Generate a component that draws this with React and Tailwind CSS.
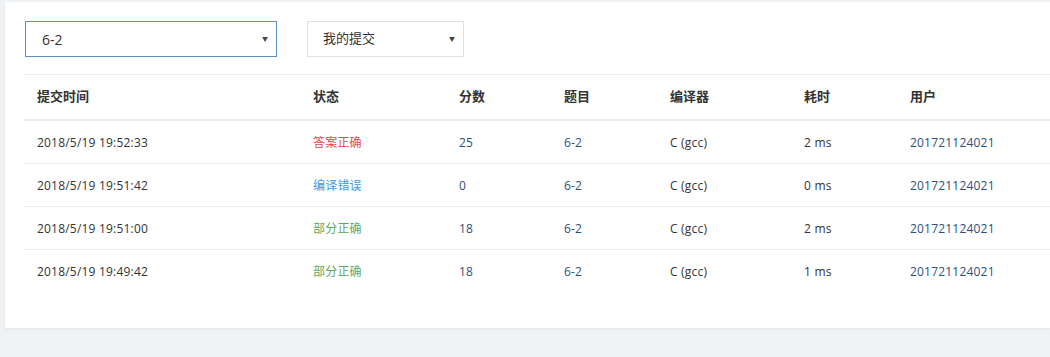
const rows = [
  { time: "2018/5/19 19:52:33", status: "答案正确", statusColor: "text-[#e5474b]", score: "25", ms: "2 ms" },
  { time: "2018/5/19 19:51:42", status: "编译错误", statusColor: "text-[#3c9be0]", score: "0", ms: "0 ms" },
  { time: "2018/5/19 19:51:00", status: "部分正确", statusColor: "text-[#5fa85a]", score: "18", ms: "2 ms" },
  { time: "2018/5/19 19:49:42", status: "部分正确", statusColor: "text-[#5fa85a]", score: "18", ms: "1 ms" },
];

const cols = "grid grid-cols-[276px_146px_105px_106px_134px_106px_1fr]";

function Select({ value, width, active }) {
  return (
    <div
      className={`flex items-center justify-between h-[36px] bg-white border ${
        active ? "border-[#5a8ec6] text-[14px] pl-[16px]" : "border-[#dcdfe3] text-[13px] pl-[15px]"
      } pr-[8px] text-[#333] ${width}`}
    >
      <span>{value}</span>
      <span className="text-[6px] text-[#444] pt-[1px]">▼</span>
    </div>
  );
}

export default function App() {
  return (
    <div
      className="w-[1050px] h-[357px] overflow-hidden bg-[#eef2f4] pt-[2px] pl-[5px]"
      style={{ fontFamily: '"Open Sans", "Noto Sans CJK SC", sans-serif' }}
    >
      <div className="bg-white pt-[19px] pb-[35px] pl-[19px] shadow-[0_1px_2px_rgba(0,0,0,0.05)]">
        <div className="flex gap-[30px] pl-[1px]">
          <Select value="6-2" width="w-[252px]" active />
          <Select value="我的提交" width="w-[157px]" />
        </div>

        <div className="mt-[17px] border-t border-[#ececec] text-[12px] tracking-[0.2px]">
          <div className={`${cols} h-[46px] items-center border-b-2 border-[#ececec] font-bold text-[13px] text-[#333] tracking-normal`}>
            <div className="pl-[13px]">提交时间</div>
            <div className="pl-[13px]">状态</div>
            <div className="pl-[13px]">分数</div>
            <div className="pl-[13px]">题目</div>
            <div className="pl-[13px]">编译器</div>
            <div className="pl-[13px]">耗时</div>
            <div className="pl-[13px]">用户</div>
          </div>
          {rows.map((r, i) => (
            <div
              key={i}
              className={`${cols} h-[43px] items-center pt-[1px] ${i < rows.length - 1 ? "border-b border-[#ececec]" : ""}`}
            >
              <div className="pl-[13px] text-[#333]">{r.time}</div>
              <div className={`pl-[13px] ${r.statusColor}`}>{r.status}</div>
              <div className="pl-[13px] text-[#2c4f7c]">{r.score}</div>
              <div className="pl-[13px] text-[#2c4f7c]">6-2</div>
              <div className="pl-[13px] text-[#333]">C (gcc)</div>
              <div className="pl-[13px] text-[#333]">{r.ms}</div>
              <div className="pl-[13px] text-[#2c4f7c]">201721124021</div>
            </div>
          ))}
        </div>
      </div>
    </div>
  );
}
